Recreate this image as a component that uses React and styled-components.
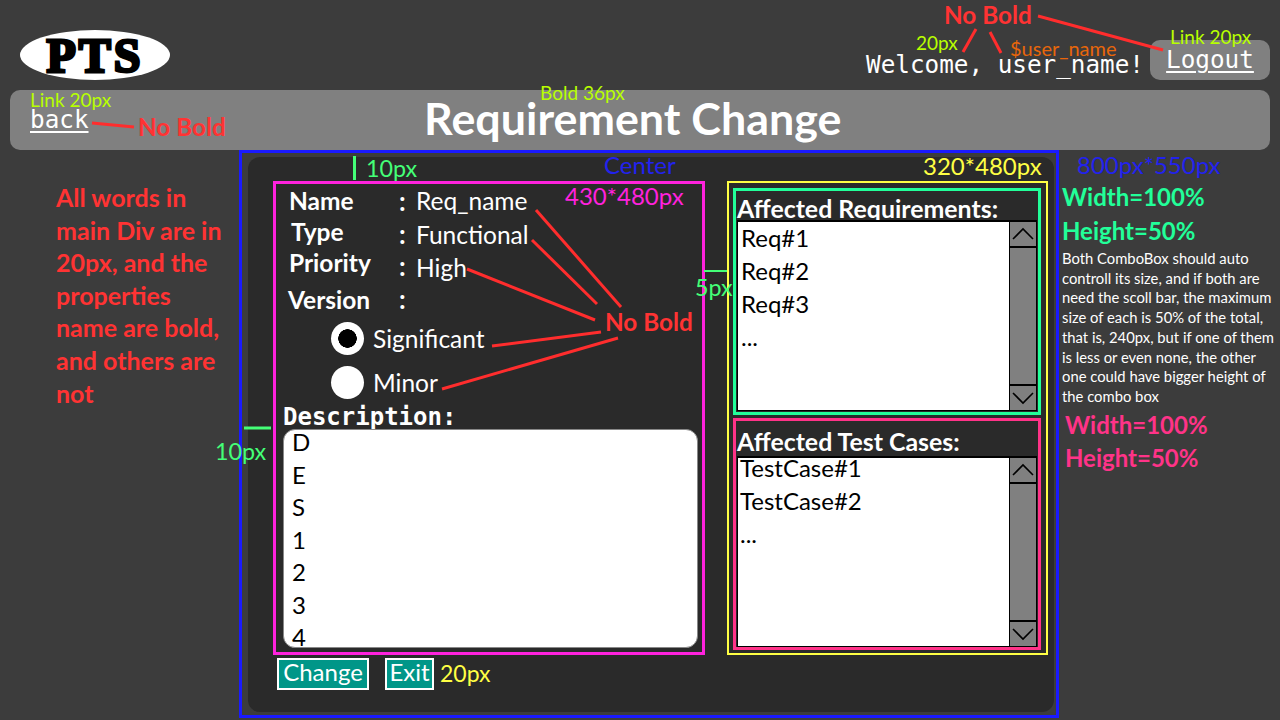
import React from 'react';
import styled, { createGlobalStyle } from 'styled-components';

const GlobalStyle = createGlobalStyle`
    * { box-sizing: border-box; }
    html, body { margin: 0; padding: 0; background: #3c3c3c; }
`;

const SANS = `Lato, "Noto Sans", sans-serif`;
const MONO = `"DejaVu Sans Mono", "Liberation Mono", monospace`;

const Chevron = ({ up }) => (
    <svg width="24" height="14" viewBox="0 0 24 14" fill="none" stroke="#000" strokeWidth="1.6">
        <polyline points={up ? '2,12 12,2 22,12' : '2,2 12,12 22,2'} />
    </svg>
);

const ComboBox = ({ items, $lift }) => (
    <Combo>
        <ComboBody $lift={$lift}>
            {items.map((item) => <ComboItem key={item} $lift={$lift}>{item}</ComboItem>)}
        </ComboBody>
        <ScrollBar>
            <ScrollButton $top><Chevron up /></ScrollButton>
            <ScrollButton><Chevron /></ScrollButton>
        </ScrollBar>
    </Combo>
);

const fields = [
    { name: 'Name', value: 'Req_name', indent: 6, drop: 0, colonDrop: 0 },
    { name: 'Type', value: 'Functional', indent: 8, drop: 6, colonDrop: 4 },
    { name: 'Priority', value: 'High', indent: 6, drop: 10, colonDrop: 6 },
    { name: 'Version', value: '', indent: 5, drop: 0, colonDrop: 0, space: 5.5 },
];

const notes = [
    { x: 30, y: 100, size: 19, color: '#b8ff00', text: 'Link 20px' },
    { x: 540, y: 93, size: 19, color: '#b8ff00', text: 'Bold 36px' },
    { x: 138, y: 127, size: 24.3, color: '#ff3333', bold: true, text: 'No Bold' },
    { x: 944, y: 15, size: 24.3, color: '#ff3333', bold: true, text: 'No Bold' },
    { x: 916, y: 43, size: 19, color: '#b8ff00', text: '20px' },
    { x: 1010, y: 49, size: 20, color: '#e8660a', text: '$user_name' },
    { x: 1170, y: 37, size: 19, color: '#b8ff00', text: 'Link 20px' },
    { x: 604, y: 165, size: 24, color: '#2222ee', text: 'Center' },
    { x: 1077, y: 165, size: 24, color: '#2222ee', text: '800px*550px' },
    { x: 923, y: 166, size: 24, color: '#ffff44', text: '320*480px' },
    { x: 565, y: 196, size: 24, color: '#ff22dd', text: '430*480px' },
    { x: 366, y: 169, size: 23.3, color: '#44ff77', text: '10px' },
    { x: 695, y: 288, size: 23.3, color: '#44ff77', text: '5px' },
    { x: 215, y: 452, size: 23.3, color: '#44ff77', text: '10px' },
    { x: 605, y: 322, size: 24.3, color: '#ff3333', bold: true, text: 'No Bold' },
    { x: 440, y: 674, size: 23, color: '#ffff44', text: '20px' },
    { x: 1062, y: 197, size: 24, color: '#22ff99', bold: true, text: 'Width=100%' },
    { x: 1062, y: 231, size: 24, color: '#22ff99', bold: true, text: 'Height=50%' },
    { x: 1065, y: 425, size: 24, color: '#ff3388', bold: true, text: 'Width=100%' },
    { x: 1065, y: 458, size: 24, color: '#ff3388', bold: true, text: 'Height=50%' },
];

const redLines = [
    [536, 210, 621, 307],
    [532, 240, 597, 304],
    [467, 269, 595, 320],
    [492, 346, 601, 332],
    [442, 389, 618, 338],
    [1038, 16, 1163, 50],
    [976, 29, 963, 52],
    [990, 32, 1001, 53],
    [92, 123, 134, 127],
];

const App = () => (
    <Page>
        <GlobalStyle />
        <Header>
            <Logo>PTS</Logo>
            <UserArea>
                <Welcome>Welcome, user_name!</Welcome>
                <LogoutBox><MonoLink>Logout</MonoLink></LogoutBox>
            </UserArea>
        </Header>

        <TitleBar>
            <MonoLink>back</MonoLink>
            <Title>Requirement Change</Title>
        </TitleBar>

        <Frame>
            <Panel>
                <Columns>
                    <MainBox>
                        {fields.map((f) => (
                            <FieldRow key={f.name} $space={f.space}>
                                <FieldName $indent={f.indent}>{f.name}</FieldName>
                                <Colon $drop={f.colonDrop}>:</Colon>
                                <FieldValue $drop={f.drop}>{f.value}</FieldValue>
                            </FieldRow>
                        ))}
                        <RadioRow $space={1.5}>
                            <Radio $checked />
                            <FieldValue>Significant</FieldValue>
                        </RadioRow>
                        <RadioRow>
                            <Radio />
                            <FieldValue>Minor</FieldValue>
                        </RadioRow>
                        <DescLabel>Description:</DescLabel>
                        <DescBox>
                            {['D', 'E', 'S', '1', '2', '3', '4'].map((c) => <DescLine key={c}>{c}</DescLine>)}
                        </DescBox>
                    </MainBox>

                    <SideBox>
                        <ReqBox>
                            <BoxHeading>Affected Requirements:</BoxHeading>
                            <ComboBox items={['Req#1', 'Req#2', 'Req#3', '...']} />
                        </ReqBox>
                        <CaseBox>
                            <BoxHeading $tall>Affected Test Cases:</BoxHeading>
                            <ComboBox items={['TestCase#1', 'TestCase#2', '...']} $lift />
                        </CaseBox>
                    </SideBox>
                </Columns>
                <Actions>
                    <ActionButton $wide>Change</ActionButton>
                    <ActionButton>Exit</ActionButton>
                </Actions>
            </Panel>
        </Frame>

        <Overlay width="1280" height="720" viewBox="0 0 1280 720">
            {redLines.map(([x1, y1, x2, y2]) => (
                <line key={`${x1}-${y1}`} x1={x1} y1={y1} x2={x2} y2={y2} stroke="#ff2d2d" strokeWidth="3" />
            ))}
            <line x1="354.5" y1="156" x2="354.5" y2="180" stroke="#44ff77" strokeWidth="3" />
            <line x1="244" y1="428" x2="271" y2="428" stroke="#44ff77" strokeWidth="3" />
            <line x1="704" y1="271" x2="727" y2="271" stroke="#44ff77" strokeWidth="2" />
        </Overlay>

        {notes.map((n) => (
            <Note key={`${n.x}-${n.y}`} $x={n.x} $y={n.y} $size={n.size} $color={n.color} $bold={n.bold}>
                {n.text}
            </Note>
        ))}

        <LeftNote>
            All words in<br />main Div are in<br />20px, and the<br />properties<br />name are bold,<br />and others are<br />not
        </LeftNote>
        <RightNote>
            Both ComboBox should auto<br />controll its size, and if both are<br />need the scoll bar, the maximum<br />size of each is 50% of the total,<br />that is, 240px, but if one of them<br />is less or even none, the other<br />one could have bigger height of<br />the combo box
        </RightNote>
    </Page>
);

export default App;

const Page = styled.div`
    position: relative;
    width: 1280px;
    height: 720px;
    overflow: hidden;
    background: #3c3c3c;
    font-family: ${SANS};
`;

const Header = styled.header`
    display: flex;
    justify-content: space-between;
    align-items: flex-start;
    height: 90px;
    padding: 30px 10px 0 20px;
`;

const Logo = styled.div`
    display: flex;
    align-items: center;
    justify-content: center;
    width: 150px;
    height: 50px;
    border-radius: 50%;
    background: #fff;
    color: #000;
    font-family: "Liberation Serif", serif;
    font-weight: 700;
    font-size: 48px;
    letter-spacing: 3px;
    -webkit-text-stroke: 3px #000;
`;

const UserArea = styled.div`
    display: flex;
    align-items: center;
    gap: 6px;
    margin-top: 10px;
`;

const Welcome = styled.span`
    color: #fff;
    font-family: ${MONO};
    font-size: 24.3px;
    margin-top: 8px;
`;

const LogoutBox = styled.div`
    display: flex;
    align-items: center;
    justify-content: center;
    width: 120px;
    height: 40px;
    border-radius: 10px;
    background: #808080;
`;

const MonoLink = styled.a`
    color: #fff;
    font-family: ${MONO};
    font-size: 24.3px;
    line-height: 28px;
    text-decoration: underline;
    text-decoration-thickness: 2px;
    text-underline-offset: 3px;
`;

const TitleBar = styled.div`
    display: flex;
    align-items: center;
    height: 60px;
    margin: 0 10px;
    padding: 0 93px 0 20px;
    border-radius: 10px;
    background: #808080;
`;

const Title = styled.h1`
    flex: 1;
    margin: 0;
    padding-bottom: 4px;
    text-align: center;
    color: #fff;
    font-size: 44.8px;
    font-weight: 700;
`;

const Frame = styled.main`
    width: 820px;
    height: 568px;
    margin-left: 239px;
    padding: 4px 2px 3px 6px;
    border: 3px solid #1a1aff;
`;

const Panel = styled.div`
    height: 100%;
    padding: 24px 0 0 25px;
    border-radius: 12px;
    background: #2a2a2a;
`;

const Columns = styled.div`
    display: flex;
    gap: 22px;
    height: 474px;
`;

const MainBox = styled.section`
    display: flex;
    flex-direction: column;
    width: 432px;
    padding: 1px 4px 4px 7px;
    border: 3px solid #ff22dd;
`;

const FieldRow = styled.div`
    display: grid;
    grid-template-columns: 116px 17px 1fr;
    grid-template-rows: 31px;
    align-items: center;
    flex: none;
    height: 31px;
    margin-top: ${(props) => props.$space || 0}px;
`;

const FieldName = styled.span`
    padding-left: ${(props) => props.$indent}px;
    color: #fff;
    font-size: 24.5px;
    font-weight: 700;
`;

const Colon = styled.span`
    padding-top: ${(props) => props.$drop || 0}px;
    color: #fff;
    font-size: 26px;
    font-weight: 700;
`;

const FieldValue = styled.span`
    padding-top: ${(props) => props.$drop || 0}px;
    color: #fff;
    font-size: 24.5px;
`;

const RadioRow = styled.div`
    display: flex;
    align-items: center;
    flex: none;
    gap: 9px;
    height: 44px;
    margin-top: ${(props) => props.$space || 0}px;
    padding-left: 48px;
`;

const Radio = styled.span`
    display: block;
    width: 33px;
    height: 33px;
    border-radius: 50%;
    background: ${(props) => (props.$checked
        ? 'radial-gradient(circle, #000 0 9px, #fff 9.5px)'
        : '#fff')};
`;

const DescLabel = styled.div`
    flex: none;
    height: 25px;
    color: #fff;
    font-family: ${MONO};
    font-size: 24px;
    font-weight: 700;
    line-height: 26px;
`;

const DescBox = styled.div`
    flex: 1;
    padding: 0 0 0 8px;
    overflow: hidden;
    border: 1px solid #888;
    border-radius: 12px;
    background: #fff;
`;

const DescLine = styled.div`
    height: 32.5px;
    color: #000;
    font-size: 24px;
    line-height: 23px;
`;

const SideBox = styled.aside`
    display: flex;
    flex-direction: column;
    gap: 3px;
    width: 321px;
    padding: 5px 5px 3px 4px;
    border: 2px solid #ffff44;
`;

const ReqBox = styled.div`
    display: flex;
    flex-direction: column;
    height: 227px;
    padding: 0 1px 1px;
    border: 3px solid #22ff99;
`;

const CaseBox = styled.div`
    display: flex;
    flex-direction: column;
    height: 232px;
    padding: 0 1px 0;
    border: 3px solid #ff3388;
`;

const BoxHeading = styled.h2`
    flex: none;
    height: ${(props) => (props.$tall ? 35 : 29)}px;
    margin: 0;
    padding-top: ${(props) => (props.$tall ? 6 : 3)}px;
    color: #fff;
    font-size: 24.9px;
    font-weight: 700;
    line-height: 29px;
    white-space: nowrap;
`;

const Combo = styled.div`
    display: flex;
    flex: 1;
    min-height: 0;
    border: 2px solid #000;
    border-width: 2px 1px 1px 1px;
`;

const ComboBody = styled.ul`
    flex: 1;
    margin: 0;
    padding: ${(props) => (props.$lift ? 0 : 1)}px 0 0 ${(props) => (props.$lift ? 2 : 3)}px;
    overflow: hidden;
    list-style: none;
    background: #fff;
`;

const ComboItem = styled.li`
    height: 33px;
    color: #000;
    font-size: 24px;
    line-height: ${(props) => (props.$lift ? 20 : 30)}px;
`;

const ScrollBar = styled.div`
    display: flex;
    flex-direction: column;
    justify-content: space-between;
    width: 27px;
    border-left: 1px solid #000;
    background: #808080;
`;

const ScrollButton = styled.div`
    display: flex;
    align-items: center;
    justify-content: center;
    height: 26px;
    border-${(props) => (props.$top ? 'bottom' : 'top')}: 2px solid #000;
`;

const Actions = styled.div`
    display: flex;
    gap: 16px;
    margin-top: 3px;
    padding-left: 4px;
`;

const ActionButton = styled.button`
    width: ${(props) => (props.$wide ? 92 : 49)}px;
    height: 32px;
    padding: 0 0 4px;
    border: 2px solid #fff;
    border-radius: 0;
    background: #009688;
    color: #fff;
    font-family: ${SANS};
    font-size: 24px;
    line-height: 24px;
`;

const Overlay = styled.svg`
    position: absolute;
    top: 0;
    left: 0;
    pointer-events: none;
`;

const Note = styled.span`
    position: absolute;
    left: ${(props) => props.$x}px;
    top: ${(props) => props.$y}px;
    transform: translateY(calc(-50% - 1px));
    color: ${(props) => props.$color};
    font-size: ${(props) => props.$size}px;
    font-weight: ${(props) => (props.$bold ? 700 : 400)};
    white-space: nowrap;
`;

const LeftNote = styled.div`
    position: absolute;
    left: 56px;
    top: 181px;
    color: #ff3333;
    font-size: 25px;
    font-weight: 700;
    line-height: 32.6px;
    white-space: nowrap;
`;

const RightNote = styled.div`
    position: absolute;
    left: 1062px;
    top: 249px;
    color: #fff;
    font-size: 14.8px;
    line-height: 19.7px;
    white-space: nowrap;
`;
